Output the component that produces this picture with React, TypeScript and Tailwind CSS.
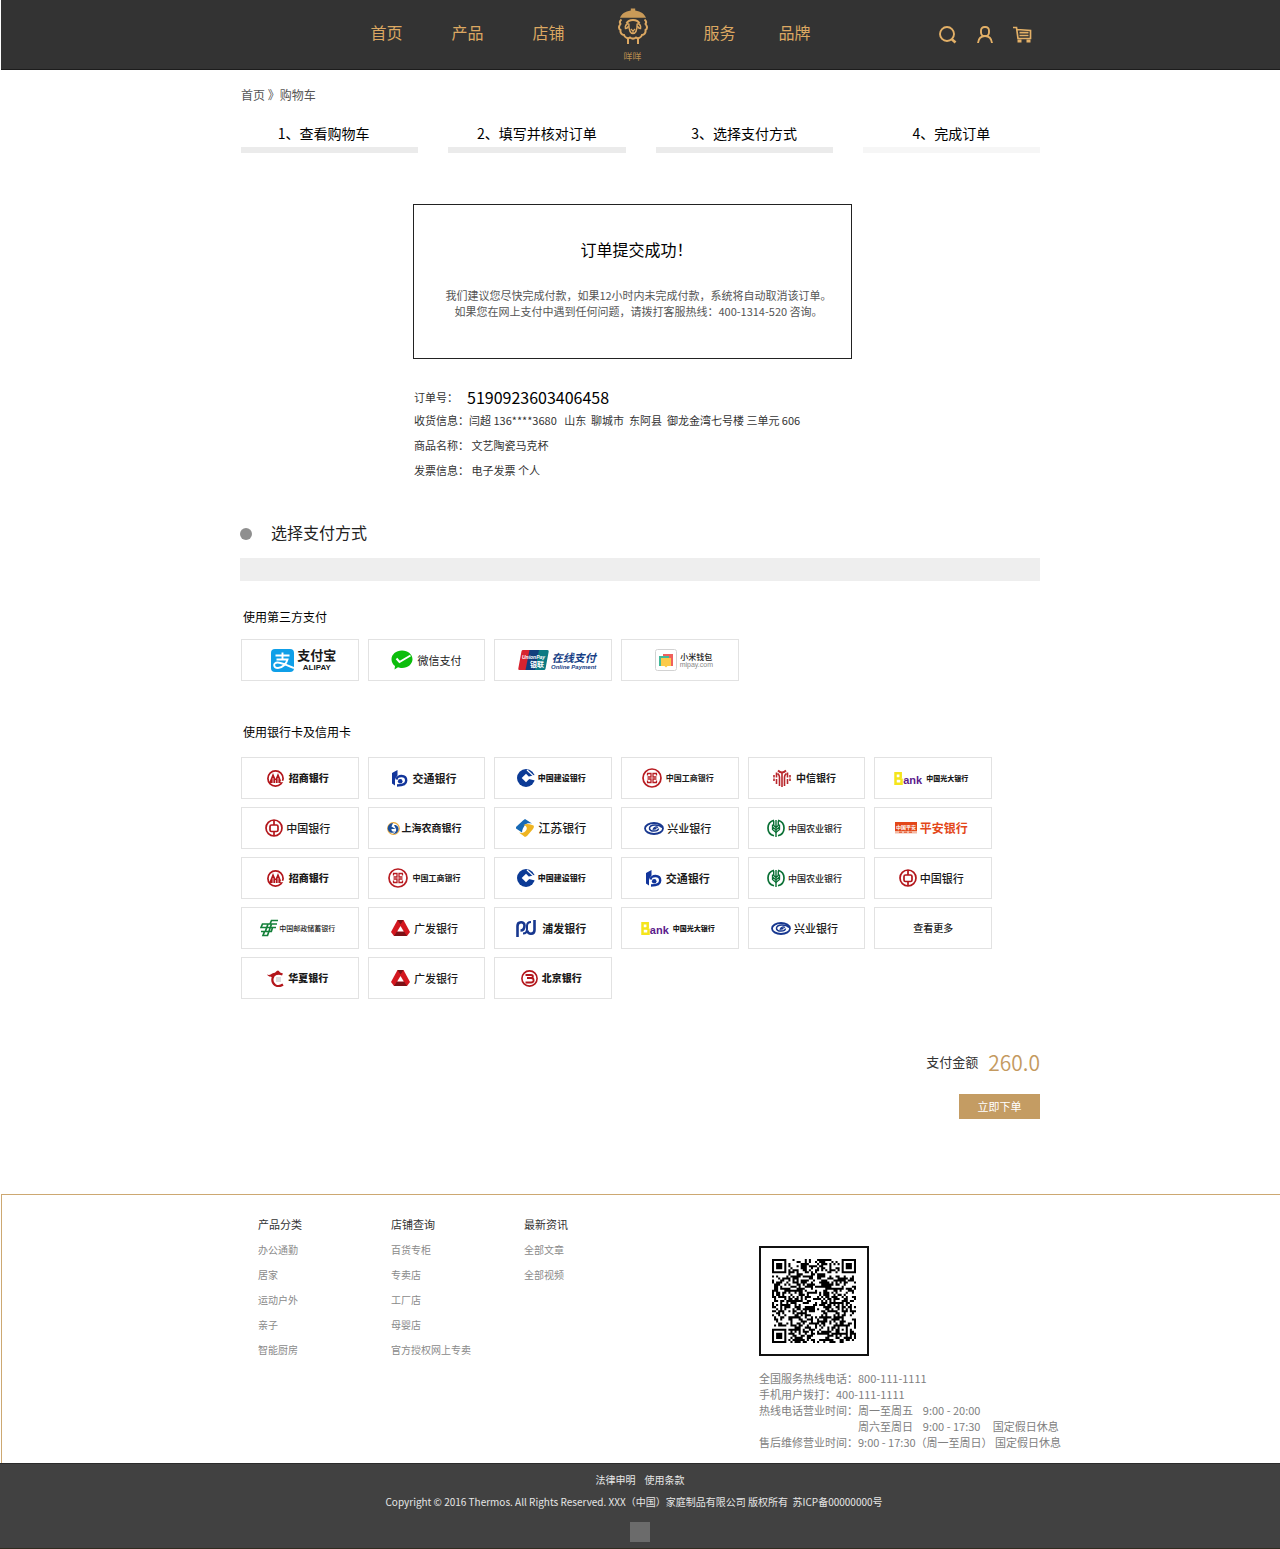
// Order Payment Page
// Confirms a submitted order and lets the buyer pick a payment method.

import type { ReactNode } from "react";

// ---- Navigation ----
const navLeft = ["首页", "产品", "店铺"];

// ---- Checkout steps ----
const steps = [
  { label: "1、查看购物车", text: "pr-3", bar: "bg-[#ebebeb]" },
  { label: "2、填写并核对订单", text: "", bar: "bg-[#ebebeb]" },
  { label: "3、选择支付方式", text: "", bar: "bg-[#ebebeb]" },
  { label: "4、完成订单", text: "", bar: "bg-[#f6f6f6]" },
];

// ---- Footer columns ----
const footerColumns = [
  { title: "产品分类", links: ["办公通勤", "居家", "运动户外", "亲子", "智能厨房"] },
  { title: "店铺查询", links: ["百货专柜", "专卖店", "工厂店", "母婴店", "官方授权网上专卖"] },
  { title: "最新资讯", links: ["全部文章", "全部视频"] },
];

/* ---- Header drawings ---- */

const SheepLogo = () => (
  <svg width="30" height="36" viewBox="0 0 30 36" fill="none" stroke="#dca862" strokeWidth="2">
    <path d="M2 9.800C3.500 6 7 3.500 12.800 2.500V.500h4.400v2C23 3.500 26.500 6 28 9.800z" fill="#c99a58" stroke="none" />
    <path d="M3.500 11.500C1.500 13 1.500 14.500 2.500 16 .500 18.500 .500 21 2.500 22 2 25 4 27 6 27 7 30 10 31 12 29.500c2 1.500 4 1.500 6 0 2 1.500 5 .500 6-2.500 2 0 4-2 3.500-5 2-1 2-3.500 0-6 1-1.500 1-3-1-4.500" />
    <path d="M10 29.500V36M20 29.500V36" />
    <path d="M8.500 15.500C10 12.500 12.500 12 15 12s5 .500 6.500 3.500" />
    <path d="M10.500 15.500C8.500 16 7 18 7.500 20.500c1.500 0 2.500-1 3-2.500M19.500 15.500c2 .500 3.500 2.500 3 5-1.500 0-2.500-1-3-2.500" strokeWidth="1.500" />
    <path d="M10.800 15.500c0 5 1.200 10 4.200 10s4.200-5 4.200-10" strokeWidth="1.500" />
    <path d="M12.800 21l2.200 2 2.200-2M15 23v2" strokeWidth="1.200" />
  </svg>
);

const SearchIcon = () => (
  <svg width="18" height="18" viewBox="0 0 18 18" fill="none" stroke="#e3b067" strokeWidth="1.900">
    <circle cx="8" cy="8" r="7" />
    <path d="M12.500 13l4 3.500" strokeWidth="2.600" />
  </svg>
);

const UserIcon = () => (
  <svg width="16" height="18" viewBox="0 0 16 18" fill="none" stroke="#e3b067" strokeWidth="1.900">
    <rect x="4" y="1" width="8" height="9" rx="3.500" />
    <path d="M1 17c.500-4 3-7 7-7s6.500 3 7 7" />
  </svg>
);

const CartIcon = () => (
  <svg width="19" height="17" viewBox="0 0 19 17" fill="none" stroke="#e3b067" strokeWidth="1.700">
    <path d="M0 1.500h3.500L5 12.500h12.500V4.500L4 3.500" />
    <path d="M6.500 6.700h9M6.500 9.500h9" />
    <path d="M4.500 15h4M13.500 15h4" strokeWidth="2.800" />
  </svg>
);

/* ---- Third party payment marks ---- */

const AlipayMark = () => (
  <svg width="23" height="23" viewBox="0 0 23 23" fill="none">
    <rect width="23" height="23" rx="4" fill="#0f9fe8" />
    <path d="M4.500 6.500h14M11.500 3.500v7M5.500 10.500h11c-1 4-5 8.500-9.500 8.500-5 0-5-5.500-.500-5.500 4.500 0 9 3 16.500 5.500" stroke="#fff" strokeWidth="1.900" />
  </svg>
);

const WechatMark = () => (
  <svg width="22" height="20" viewBox="0 0 22 20" fill="none">
    <path d="M11 .500c6 0 10.500 4 10.500 8.700S17 18 11 18c-1.500 0-3-.200-4-.700L3.500 19.500 4 16C1.800 14.300.500 12 .500 9.200.500 4.500 5 .500 11 .500z" fill="#0bbd0b" />
    <path d="M5.500 8.500l3 3.500L19.500 5.500" stroke="#fff" strokeWidth="2" />
  </svg>
);

const UnionPayMark = () => (
  <svg width="31" height="20" viewBox="0 0 31 20">
    <path d="M5 0h10L11 20H1.500Q0 20 .300 18.500L3.500 1.200Q3.800 0 5 0z" fill="#d8232f" />
    <path d="M11.500 0h11l-4 20h-11z" fill="#123f7d" />
    <path d="M21 0h8.500Q31 0 30.700 1.500L27.500 18.800Q27.200 20 26 20h-9z" fill="#0b7b83" />
    <text x="4" y="9" fontSize="5" fontWeight="700" fontStyle="italic" fill="#fff" fontFamily="Liberation Sans, sans-serif">UnionPay</text>
    <text x="12" y="17" fontSize="7" fontWeight="700" fill="#fff" fontFamily="Noto Sans CJK SC, sans-serif">银联</text>
  </svg>
);

const MipayMark = () => (
  <svg width="22" height="22" viewBox="0 0 22 22">
    <rect x=".500" y=".500" width="21" height="21" rx="2" fill="#fff" stroke="#d2d2d2" />
    <path d="M8 5h10v12H8z" fill="#f0605c" />
    <path d="M4 7h10v10H4z" fill="#41b99a" />
    <path d="M6 9h10v8h-3.500L11 18.500 9.500 17H6z" fill="#fbcb4b" />
  </svg>
);

/* ---- Bank marks ---- */

const CmbMark = () => (
  <svg width="17" height="17" viewBox="0 0 17 17" fill="none">
    <circle cx="8.500" cy="8.500" r="7.600" fill="#fff" stroke="#b3161b" strokeWidth="1.700" />
    <path d="M2 13L6 3l2.500 6L11 3l4 10z" fill="#b3161b" />
    <path d="M6 13V8M11 13V8M8.500 13v-3" stroke="#fff" strokeWidth=".700" />
    <path d="M13.500 11.500H17" stroke="#fff" strokeWidth="1.500" />
  </svg>
);

const BocomMark = () => (
  <svg width="16" height="17" viewBox="0 0 16 17" fill="none">
    <path d="M0 3L5.500 0v5.500L3 9v6.500L0 13.500z" fill="#12359b" />
    <path d="M4.500 9.500C5 5 14.200 4.500 14.200 10.500 14.200 14 11 15.500 5 15.500" stroke="#12359b" strokeWidth="2.400" />
    <circle cx="8.200" cy="11.300" r="2.300" fill="#12359b" />
  </svg>
);

const CcbMark = () => (
  <svg width="18" height="18" viewBox="0 0 18 18" fill="none">
    <circle cx="9" cy="9" r="9" fill="#0b3a95" />
    <path d="M4.700 9L9 4.700 13.300 9 9 13.300z" fill="#fff" />
    <path d="M12 7.500L18 6v5.500L12 10z" fill="#fff" />
    <path d="M10 1l7 6.500" stroke="#fff" strokeWidth="1.200" />
  </svg>
);

const IcbcMark = () => (
  <svg width="20" height="20" viewBox="0 0 20 20" fill="none" stroke="#b81c22">
    <circle cx="10" cy="10" r="9" strokeWidth="1.700" />
    <path d="M5 5.500h4v3.500H5.500M5.500 11H9v3.500H5M5.500 7.500V5.500M5.500 14.500v-2" strokeWidth="1.300" />
    <path d="M15 5.500h-4v3.500h3.500M14.500 11H11v3.500h4M14.500 7.500V5.500M14.500 14.500v-2" strokeWidth="1.300" />
  </svg>
);

const CiticMark = () => (
  <svg width="18" height="18" viewBox="0 0 18 18" fill="none" stroke="#b8262b" strokeWidth="1.600">
    <path d="M1 6v2.500M1 9.500V12M17 6v2.500M17 9.500V12" />
    <path d="M3.500 3.500v5M3.500 10v5M14.500 3.500v5M14.500 10v5" />
    <path d="M6.500 17V8Q6.500 6 4.500 4.500M11.500 17V8Q11.500 6 13.500 4.500M9 18V4" />
    <path d="M5 1.500Q9 5.500 13 1.500" strokeWidth="1.800" />
  </svg>
);

const CebMark = () => (
  <span className="flex items-end font-['Liberation_Sans',sans-serif] font-bold leading-none">
    <svg width="9" height="13" viewBox="0 0 9 13" fill="none" stroke="#f5e51b" strokeWidth="2.500">
      <path d="M1.500 1.300h5.200v4.200L5.500 6.500 7.500 7.500v4.200h-6zM1.500 6.500h4.500" />
    </svg>
    <span className="text-[11px] leading-[9px] text-[#5c1b8c]">ank</span>
  </span>
);

const BocMark = () => (
  <svg width="18" height="18" viewBox="0 0 18 18" fill="none" stroke="#b3161b" strokeWidth="1.700">
    <circle cx="9" cy="9" r="8" />
    <rect x="5" y="6" width="8" height="6.500" rx="1.500" />
    <path d="M9 1v5M9 12.500V17" />
  </svg>
);

const SrcbMark = () => (
  <svg width="13" height="13" viewBox="0 0 13 13" fill="none">
    <circle cx="6.500" cy="6.500" r="5.800" stroke="#e9a93a" strokeWidth="1.200" />
    <path d="M6 1C2 1 0 5 1 8c1.500 3.500 5.500 3.500 7 1.500-2 .500-4-.500-3.500-2.500h4L4.500 4.500z" fill="#1b4f9b" />
    <path d="M7 3c3-.500 5 2 4.500 5-1 3-3 4-5.500 4 3-2 4-4 2.500-6z" fill="#1b4f9b" />
  </svg>
);

const JsbMark = () => (
  <svg width="18" height="18" viewBox="0 0 18 18">
    <path d="M9 0l7 4.500c-4-.500-6 0-7 1.500C7.500 8 6 11 6 13.500L0 9.500Q-.500 8.500 .500 7.500L7 1.500z" fill="#1769b5" />
    <path d="M9 18l-6-4.500c3.500 1 5.500 0 7-2C11.500 9.500 11 6.500 7.500 6c3-2 7-1 10 .500Q18.500 8 17 10l-6 7z" fill="#eeb422" />
  </svg>
);

const CibMark = () => (
  <svg width="20" height="13" viewBox="0 0 20 13" fill="none" stroke="#17378f">
    <ellipse cx="10" cy="6.500" rx="9" ry="5.500" strokeWidth="1.800" />
    <path d="M18 5.500c-3-3.500-12-3.500-12.500.500C5 10 14 10 14.500 6.500M14 5.500c-1.500-1-4-.500-4.500 1.500l3-.500" strokeWidth="1.500" />
  </svg>
);

const AbcMark = () => (
  <svg width="18" height="18" viewBox="0 0 18 18" fill="none" stroke="#0a7035">
    <path d="M7 1.250A8 8 0 0 0 7 16.750M11 1.250A8 8 0 0 1 11 16.750" strokeWidth="1.700" />
    <path d="M9 1v17M6.700 2v4.500L9 8.500l2.300-2V2" strokeWidth="1.400" />
    <path d="M5.500 5.500v5L9 13.500l3.500-3v-5M5.500 8L9 11l3.500-3" strokeWidth="1.300" />
  </svg>
);

const PinganMark = () => (
  <svg width="22" height="12" viewBox="0 0 22 12">
    <path d="M0 0h22v9H0z" fill="#e34719" />
    <path d="M0 9h22v2.500H0z" fill="#f3b9a4" />
    <text x="1" y="6.500" fontSize="5" fontWeight="700" fill="#fff" fontFamily="Noto Sans CJK SC, sans-serif">中国平安</text>
    <path d="M4 10.200h3M9 10.200h3M14 10.200h3" stroke="#e34719" />
  </svg>
);

const PsbcMark = () => (
  <svg width="18" height="18" viewBox="0 0 18 18" fill="none" stroke="#15803a" strokeWidth="1.700">
    <path d="M18 1.500h-6.500L10 5H2.500L1 8.500H13M17 5h-5.500L7.500 16.500H3L4.500 12.500H1M16 8.500h-3.500l-1.200 4H4.500M8 5L5.500 12" />
  </svg>
);

const CgbMark = () => (
  <svg width="19" height="16" viewBox="0 0 19 16">
    <path d="M6.500 0h6L19 12l-3 4H3l-3-4z" fill="#d3171f" />
    <path d="M6.500 0h6L9.500 4.500zM3 16l3-4.500h7L16 16z" fill="#7d1116" />
    <path d="M9.500 6l3.300 5.500H6.200z" fill="#fff" />
  </svg>
);

const SpdbMark = () => (
  <svg width="20" height="17" viewBox="0 0 20 17" fill="none" stroke="#17378f" strokeWidth="2.600">
    <path d="M1.500 17V6C1.500 1 8.500 1 8.500 5.500S6 10.500 4.500 10.500M18.500 0v10c0 5-7 5-7 .500" />
    <path d="M7 13.500c3 0 4-1.500 4-4.500V6c0-2.500 1.500-4 4-4" strokeWidth="2" />
  </svg>
);

const HxbMark = () => (
  <svg width="17" height="17" viewBox="0 0 17 17" fill="none">
    <path d="M16 14.500C10 18.500 4.500 14 5.500 8.500 6.500 4 11 2.500 15.500 4.500" stroke="#b3161b" strokeWidth="2.200" />
    <path d="M0 4.500c3 1.500 4-1 6.500-1.500 2 0 2.500-2 4.500-2.500 1.500 .500 1.500 1.500 3 3L8 5 5.500 8C4.500 6 2 7.500 0 4.500z" fill="#b3161b" />
    <rect x="9" y="7" width="5" height="5" fill="#dedede" />
  </svg>
);

const BobMark = () => (
  <svg width="17" height="17" viewBox="0 0 17 17" fill="none" stroke="#b3161b">
    <circle cx="8.500" cy="8.500" r="7.600" strokeWidth="1.600" />
    <path d="M4.500 5h5.500c2.500 0 2.500 3 0 3H6M10 8c3.500 0 3.500 4.500 0 4.500H4.500" strokeWidth="1.800" />
  </svg>
);

/* ---- Bank table, keyed by short code ---- */

const banks: Record<string, { name: string; mark: ReactNode; text: string; gap: string }> = {
  cmb: { name: "招商银行", mark: <CmbMark />, text: "text-[10px] font-black", gap: "gap-[5px]" },
  bocom: { name: "交通银行", mark: <BocomMark />, text: "text-[11px] font-bold", gap: "gap-1" },
  ccb: { name: "中国建设银行", mark: <CcbMark />, text: "text-[8px] font-black", gap: "gap-[3px]" },
  icbc: { name: "中国工商银行", mark: <IcbcMark />, text: "text-[8px] font-bold", gap: "gap-1" },
  citic: { name: "中信银行", mark: <CiticMark />, text: "text-[10px] font-bold", gap: "gap-[5px]" },
  ceb: { name: "中国光大银行", mark: <CebMark />, text: "text-[7px] font-black", gap: "gap-1" },
  boc: { name: "中国银行", mark: <BocMark />, text: "text-[11px] font-medium", gap: "gap-[3px]" },
  srcb: { name: "上海农商银行", mark: <SrcbMark />, text: "text-[10px] font-bold", gap: "gap-px" },
  jsb: { name: "江苏银行", mark: <JsbMark />, text: "text-[12px] font-medium", gap: "gap-1" },
  cib: { name: "兴业银行", mark: <CibMark />, text: "text-[11px] font-medium", gap: "gap-[3px]" },
  abc: { name: "中国农业银行", mark: <AbcMark />, text: "text-[9px] font-medium", gap: "gap-[3px]" },
  pingan: { name: "平安银行", mark: <PinganMark />, text: "text-[12px] font-bold text-[#e34719]", gap: "gap-[3px]" },
  psbc: { name: "中国邮政储蓄银行", mark: <PsbcMark />, text: "text-[7px] font-medium", gap: "gap-px" },
  cgb: { name: "广发银行", mark: <CgbMark />, text: "text-[11px] font-medium", gap: "gap-1" },
  spdb: { name: "浦发银行", mark: <SpdbMark />, text: "text-[11px] font-bold", gap: "gap-[6px]" },
  hxb: { name: "华夏银行", mark: <HxbMark />, text: "text-[10px] font-black", gap: "gap-1" },
  bob: { name: "北京银行", mark: <BobMark />, text: "text-[10px] font-black", gap: "gap-1" },
};

// Order of the tiles; "more" is the plain text tile
const bankTiles = [
  "cmb", "bocom", "ccb", "icbc", "citic", "ceb",
  "boc", "srcb", "jsb", "cib", "abc", "pingan",
  "cmb", "icbc", "ccb", "bocom", "abc", "boc",
  "psbc", "cgb", "spdb", "ceb", "cib", "more",
  "hxb", "cgb", "bob",
];

const tileClass =
  "flex h-[42px] items-center justify-center whitespace-nowrap border border-[#e2e2e2] bg-white leading-none text-[#1a1a1a]";

const BankTile = ({ code }: { code: string }) => {
  if (code === "more") {
    return (
      <button type="button" className={`${tileClass} text-[10px] font-medium`}>
        查看更多
      </button>
    );
  }
  const bank = banks[code];
  return (
    <button type="button" className={`${tileClass} ${bank.gap} pr-1`}>
      {bank.mark}
      <span className={bank.text}>{bank.name}</span>
    </button>
  );
};

/* ---- QR code ---- */

const QR_SIZE = 41;

// Value of a concentric square pattern, or null outside of it
const ringAt = (x: number, y: number, cx: number, cy: number, reach: number, light: number) => {
  const d = Math.max(Math.abs(x - cx), Math.abs(y - cy));
  if (d > reach) return null;
  return d !== light && d !== 4;
};

const buildQrPath = () => {
  let seed = 20160519;
  let path = "";
  for (let y = 0; y < QR_SIZE; y++) {
    for (let x = 0; x < QR_SIZE; x++) {
      seed = (seed * 48271) % 2147483647;
      const dark =
        ringAt(x, y, 3, 3, 4, 2) ??
        ringAt(x, y, QR_SIZE - 4, 3, 4, 2) ??
        ringAt(x, y, 3, QR_SIZE - 4, 4, 2) ??
        ringAt(x, y, 34, 34, 2, 1) ??
        seed / 2147483647 < 0.52;
      if (dark) path += `M${x} ${y}h1v1h-1z`;
    }
  }
  return path;
};

const qrPath = buildQrPath();

const QrCode = () => (
  <div className="flex size-[110px] items-center justify-center border-2 border-[#111]">
    <svg width="84" height="84" viewBox="0 0 41 41" role="img" aria-label="二维码">
      <path d={qrPath} fill="#000" />
    </svg>
  </div>
);

/* ---- Page sections ---- */

const Header = () => (
  <header className="ml-px border-b border-[#1c1c1c] bg-[#333]">
    <div className="mx-auto flex h-[69px] max-w-[800px] text-[16px] leading-6 text-[#dca862]">
      <nav className="flex pl-[130px]">
        <div className="flex gap-[49px] pt-5">
          {navLeft.map((item) => (
            <a key={item} href="#">{item}</a>
          ))}
        </div>
        <a href="#" className="ml-[53px] flex flex-col items-center pt-2 text-[9px] leading-[14px]">
          <SheepLogo />
          <span className="mt-[6px] text-[#b88d50]">咩咩</span>
        </a>
        <div className="ml-[56px] flex gap-[43px] pt-5">
          <a href="#">服务</a>
          <a href="#">品牌</a>
        </div>
      </nav>
      <div className="ml-auto flex items-start gap-5 pt-[26px] pr-[9px]">
        <button type="button" aria-label="搜索"><SearchIcon /></button>
        <button type="button" aria-label="我的账户"><UserIcon /></button>
        <button type="button" aria-label="购物车"><CartIcon /></button>
      </div>
    </div>
  </header>
);

const OrderInfo = () => (
  <dl className="mt-7 ml-[174px] whitespace-pre text-[11px] leading-[25px] text-[#333]">
    <div className="flex items-center leading-[21px]">
      <dt className="w-[53px]">订单号：</dt>
      <dd className="text-[16px] text-black">5190923603406458</dd>
    </div>
    <div className="flex">
      <dt>收货信息：</dt>
      <dd>{"闫超 136****3680   山东  聊城市  东阿县  御龙金湾七号楼 三单元 606"}</dd>
    </div>
    <div className="flex">
      <dt>商品名称：</dt>
      <dd>{" 文艺陶瓷马克杯"}</dd>
    </div>
    <div className="flex">
      <dt>发票信息：</dt>
      <dd>{" 电子发票 个人"}</dd>
    </div>
  </dl>
);

const ThirdParty = () => (
  <div className="mt-3 grid w-[752px] max-w-full grid-cols-6 gap-x-[9px] pl-px">
    <button type="button" className={`${tileClass} gap-[3px] pl-2`}>
      <AlipayMark />
      <span className="flex flex-col items-center">
        <span className="text-[13px] font-bold leading-[14px]">支付宝</span>
        <span className="mt-0.5 font-['Liberation_Sans',sans-serif] text-[8px] font-bold leading-[8px]">ALIPAY</span>
      </span>
    </button>
    <button type="button" className={`${tileClass} gap-1`}>
      <WechatMark />
      <span className="text-[11px]">微信支付</span>
    </button>
    <button type="button" className={`${tileClass} gap-0.5 pl-2`}>
      <UnionPayMark />
      <span className="flex flex-col items-center italic text-[#173f86]">
        <span className="text-[11px] font-bold leading-[13px]">在线支付</span>
        <span className="font-['Liberation_Sans',sans-serif] text-[6px] font-bold leading-[6px]">Online Payment</span>
      </span>
    </button>
    <button type="button" className={`${tileClass} gap-[3px] pl-2`}>
      <MipayMark />
      <span className="flex flex-col">
        <span className="text-[8px] font-medium leading-[9px]">小米钱包</span>
        <span className="font-['Liberation_Sans',sans-serif] text-[7px] leading-[8px] text-[#888]">mipay.com</span>
      </span>
    </button>
  </div>
);

const Footer = () => (
  <footer>
    <div className="ml-px border-t border-l border-[#cda871]">
      <div className="mx-auto flex max-w-[840px] pt-4 pb-[13px] pl-[37px]">

        {/* ---- Link Columns ---- */}
        {footerColumns.map((column) => (
          <div key={column.title} className="w-[133px]">
            <h3 className="text-[11px] leading-[26px] text-[#333]">{column.title}</h3>
            <ul className="text-[10px] leading-[25px] text-[#8a8a8a]">
              {column.links.map((link) => (
                <li key={link}><a href="#">{link}</a></li>
              ))}
            </ul>
          </div>
        ))}

        {/* ---- Contact ---- */}
        <div className="ml-auto w-[302px] pt-[35px]">
          <QrCode />
          <div className="mt-3.5 whitespace-pre text-[11px] leading-4 text-[#808080]">
            <p>全国服务热线电话：800-111-1111</p>
            <p>手机用户拨打：400-111-1111</p>
            <p>{"热线电话营业时间：周一至周五    9:00 - 20:00"}</p>
            <p className="pl-[99px]">{"周六至周日    9:00 - 17:30     国定假日休息"}</p>
            <p>{"售后维修营业时间：9:00 - 17:30（周一至周日） 国定假日休息"}</p>
          </div>
        </div>
      </div>
    </div>

    {/* ---- Legal Bar ---- */}
    <div className="flex flex-col items-center border-t border-b border-t-[#2b2b2b] border-b-[#2f2c20] bg-[#414141] pt-2 pb-1.5 text-[10px] leading-4 text-[#e6e6e6]">
      <div className="flex gap-[9px]">
        <a href="#">法律申明</a>
        <a href="#">使用条款</a>
      </div>
      <p className="mt-1.5 whitespace-pre pr-3">
        {"Copyright © 2016 Thermos. All Rights Reserved. XXX（中国）家庭制品有限公司 版权所有  苏ICP备00000000号"}
      </p>
      <div className="mt-3 size-5 bg-[#6b6b6b]" />
    </div>
  </footer>
);

const App = () => {
  return (
    <div className="bg-white font-['Noto_Sans_CJK_SC',sans-serif] text-black" lang="zh-CN">
      <Header />

      <main className="mx-auto max-w-[800px] pt-[15px]">

        {/* ---- Breadcrumb ---- */}
        <nav className="pl-px text-[12px] leading-5 text-[#555]">
          <a href="#">首页</a> 》<a href="#">购物车</a>
        </nav>

        {/* ---- Steps ---- */}
        <ol className="mt-[18px] grid grid-cols-4 gap-[30px] pl-px text-center text-[14px] leading-5">
          {steps.map((step) => (
            <li key={step.label}>
              <span className={`block ${step.text}`}>{step.label}</span>
              <div className={`mt-1 h-1.5 ${step.bar}`} />
            </li>
          ))}
        </ol>

        {/* ---- Success Box ---- */}
        <section className="mt-[51px] ml-[173px] w-[439px] border border-[#222] pt-8 pb-[39px] text-center">
          <h1 className="pl-2 text-[16px] leading-6">订单提交成功！</h1>
          <p className="mt-[26px] whitespace-nowrap pl-3 text-[11px] leading-4 text-[#555]">
            我们建议您尽快完成付款，如果12小时内未完成付款，系统将自动取消该订单。
            <br />
            如果您在网上支付中遇到任何问题，请拨打客服热线：400-1314-520 咨询。
          </p>
        </section>

        <OrderInfo />

        {/* ---- Payment Methods ---- */}
        <section className="mt-[37px]">
          <div className="flex items-center gap-[19px]">
            <span className="mt-1 size-3 rounded-full bg-[#8f8f8f]" />
            <h2 className="text-[16px] leading-6 text-[#222]">选择支付方式</h2>
          </div>
          <div className="mt-3.5 h-[23px] bg-[#eee]" />

          <h3 className="mt-[26px] pl-[3px] text-[12px] leading-5">使用第三方支付</h3>
          <ThirdParty />

          <h3 className="mt-[41px] pl-[3px] text-[12px] leading-5">使用银行卡及信用卡</h3>
          <div className="mt-[15px] grid w-[752px] max-w-full grid-cols-6 gap-x-[9px] gap-y-2 pl-px">
            {bankTiles.map((code, index) => (
              <BankTile key={index} code={code} />
            ))}
          </div>
        </section>

        {/* ---- Total ---- */}
        <section className="mt-[47px] mb-[75px] flex flex-col items-end">
          <p className="flex items-center gap-2.5 text-[13px] leading-8 text-[#333]">
            支付金额
            <strong className="text-[21px] font-[350] text-[#c49a5f]">260.0</strong>
          </p>
          <button type="button" className="mt-4 h-[25px] w-[81px] bg-[#c49c63] text-[11px] text-white">
            立即下单
          </button>
        </section>

      </main>

      <Footer />
    </div>
  );
};

export default App;
